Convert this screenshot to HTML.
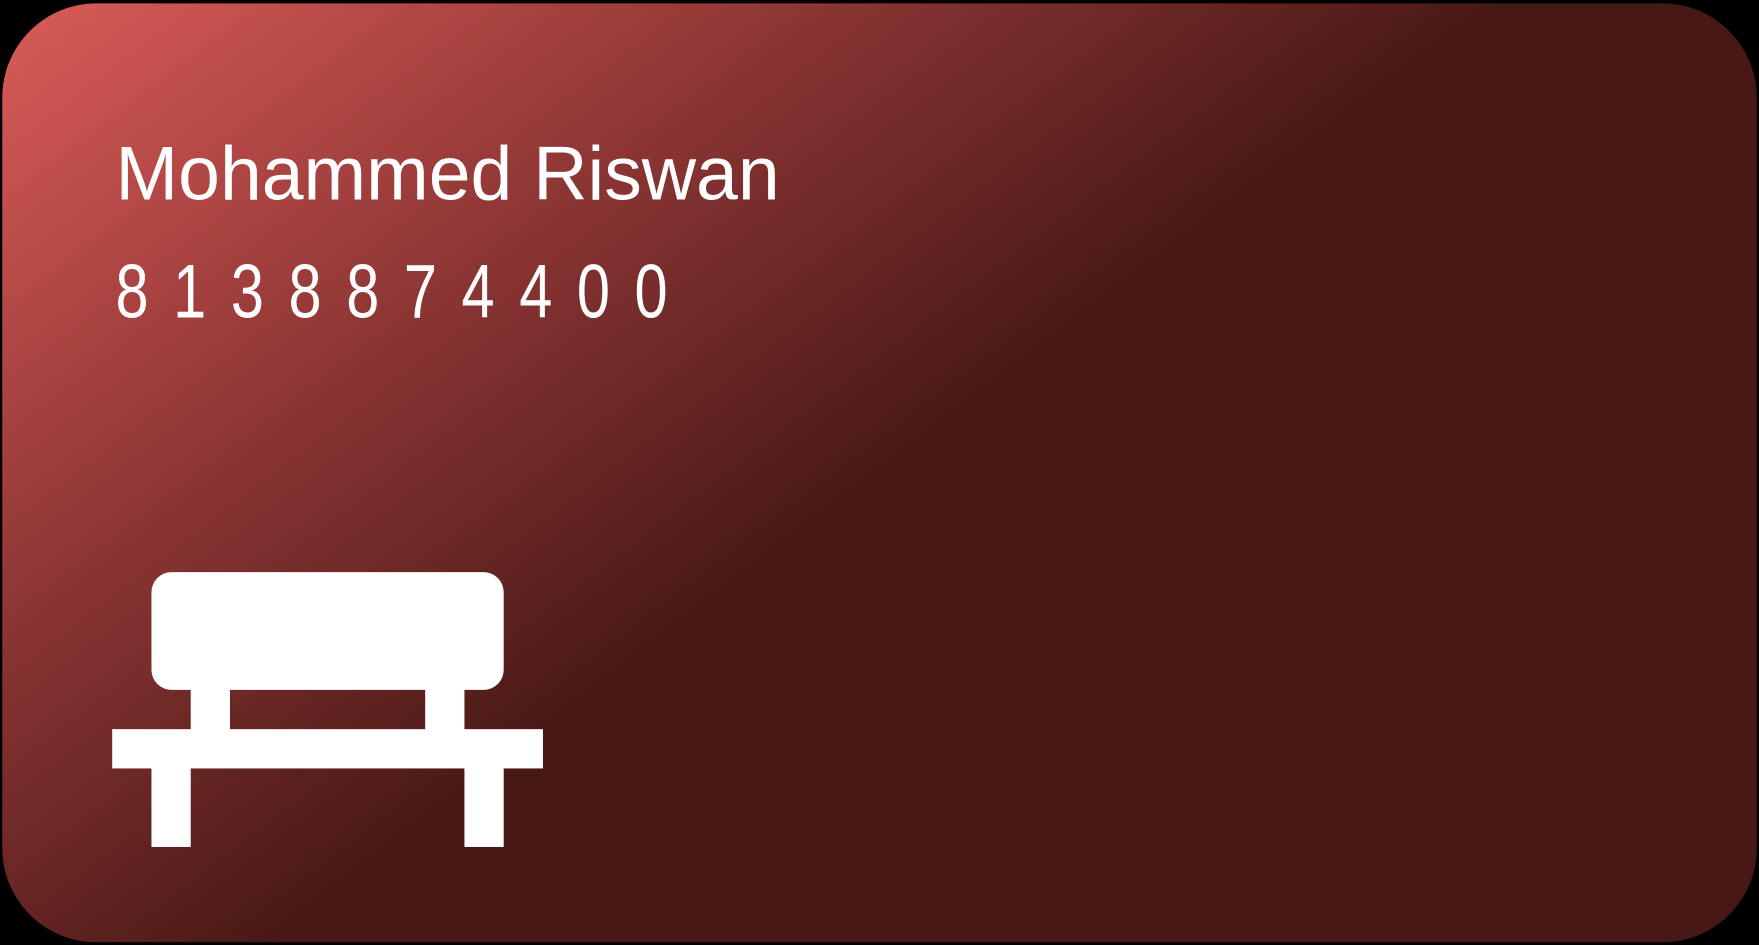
<!DOCTYPE html>
<html><head><meta charset="utf-8"><style>
html,body{margin:0;padding:0;background:#000;width:1759px;height:945px;overflow:hidden}
svg{display:block}
</style></head><body>
<svg width="1759" height="945" viewBox="0 0 1568 842.4" xmlns="http://www.w3.org/2000/svg">
<defs>
<linearGradient id="g" x1="0" y1="0" x2="1" y2="1" gradientUnits="objectBoundingBox" gradientTransform="rotate(-10 0 0)">
<stop offset="0" stop-color="#da5c58"/>
<stop offset="0.22" stop-color="#9a3c3a"/>
<stop offset="0.5" stop-color="#471816"/>
<stop offset="1" stop-color="#471816"/>
</linearGradient>
</defs>
<rect x="2" y="3" width="1564" height="837" rx="84" fill="url(#g)"/>
<text x="103" y="178" font-family="Liberation Sans, sans-serif" font-size="68" fill="#fff" textLength="592" lengthAdjust="spacingAndGlyphs">Mohammed Riswan</text>
<g transform="scale(0.78,1)">
<text x="132" y="283" font-family="Liberation Sans, sans-serif" font-size="68" fill="#fff" textLength="631" lengthAdjust="spacing">8138874400</text>
</g>
<g fill="#fff">
<rect x="135" y="510" width="314" height="105" rx="18"/>
<rect x="170" y="605" width="35" height="50"/>
<rect x="379" y="605" width="35" height="50"/>
<rect x="100" y="650" width="384" height="35"/>
<rect x="135" y="680" width="35" height="75"/>
<rect x="414" y="680" width="35" height="75"/>
</g>
</svg>
</body></html>
